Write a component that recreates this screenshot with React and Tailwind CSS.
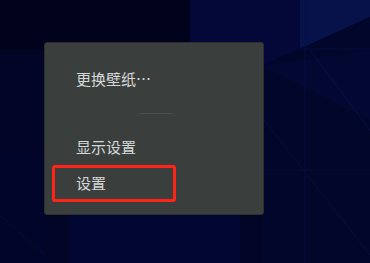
import React from "react";

const Wallpaper = () => (
  <svg className="absolute inset-0 h-full w-full" viewBox="0 0 370 263" preserveAspectRatio="none">
    <rect width="370" height="263" fill="#020525" />
    <polygon points="0,0 190,0 190,50 0,50" fill="#01031c" />
    <polygon points="190,0 370,0 370,17 262,66 250,50 190,50" fill="#030838" />
    <polygon points="300,0 370,0 370,17 300,49" fill="#061249" />
    <polygon points="262,66 370,17 370,263 262,263" fill="#02062b" />
    <polygon points="262,66 370,50 370,120" fill="#030832" />
    <polygon points="0,150 44,150 44,263 0,263" fill="#01052a" />
    <polygon points="70,213 240,213 240,263 70,263" fill="#020632" />
    <line x1="305" y1="0" x2="305" y2="263" stroke="#08134a" strokeWidth="0.6" />
    <line x1="300" y1="49" x2="370" y2="49" stroke="#08134a" strokeWidth="0.6" />
    <line x1="262" y1="170" x2="370" y2="170" stroke="#081448" strokeWidth="0.5" />
    <line x1="310" y1="50" x2="370" y2="130" stroke="#0a1856" strokeWidth="0.6" />
    <line x1="0" y1="215" x2="45" y2="255" stroke="#071040" strokeWidth="0.6" />
    <line x1="264" y1="120" x2="370" y2="255" stroke="#08134a" strokeWidth="0.6" />
  </svg>
);

const App = () => {
  return (
    <div className="relative h-[263px] w-[370px] overflow-hidden" style={{ fontFamily: '"Noto Sans CJK SC", "Noto Sans", sans-serif' }}>
      <Wallpaper />

      {/* Context menu */}
      <div className="relative ml-[44px] mt-[42px] flex w-[220px] flex-col rounded-[3px] border border-[#2b302f] bg-[#3a3f3e] pb-[12px] pt-[18px] text-[15px] text-[#d6d8d7]">
        <div className="flex h-[36px] items-center pl-[31px]">更换壁纸…</div>

        <div className="flex h-[32px] items-center">
          <div className="ml-[94px] h-px w-[34px] bg-[#4a504f]" />
        </div>

        <div className="flex h-[36px] items-center pl-[31px]">显示设置</div>

        <div className="ml-[7px] flex h-[37px] w-[124px] items-center rounded-[3px] border-[3px] border-[#ff2418] pl-[21px]">
          设置
        </div>
      </div>
    </div>
  );
};

export default App;
